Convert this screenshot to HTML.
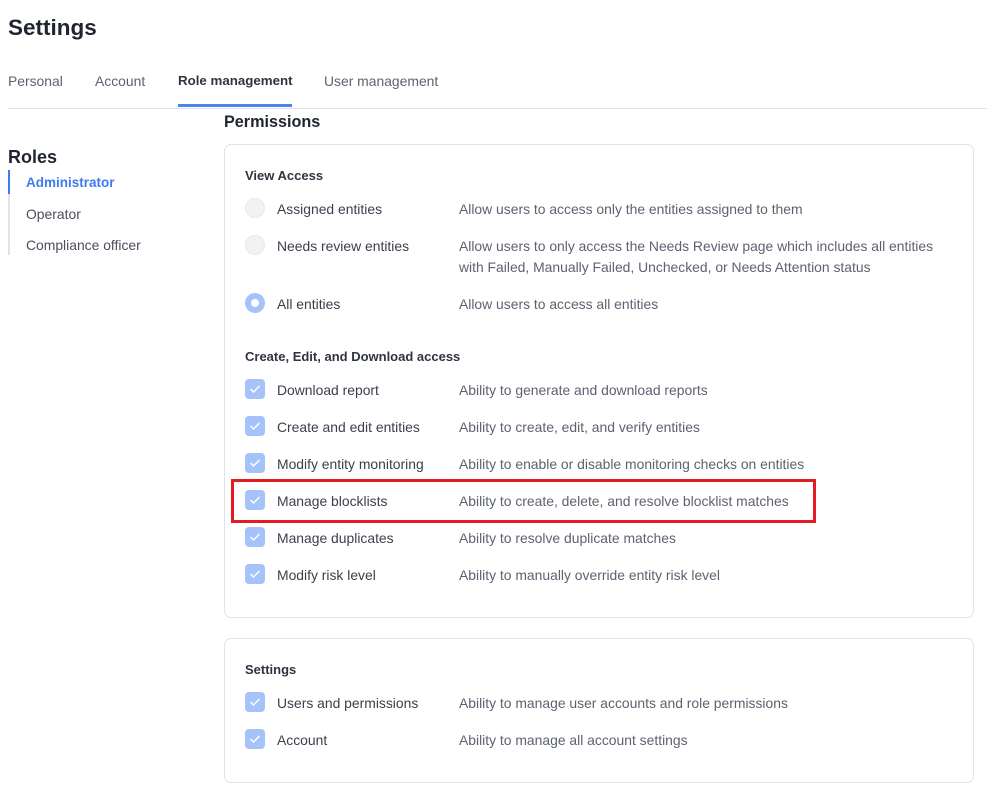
<!DOCTYPE html>
<html><head><style>
*{margin:0;padding:0;box-sizing:border-box}
body{width:987px;height:787px;background:#fff;font-family:"Liberation Sans",sans-serif;color:#2f3441;position:relative;overflow:hidden}
.a{position:absolute;white-space:nowrap}
.t{font-size:13.9px;color:#3a3f4b}
.d{font-size:13.9px;color:#5d6270}
.cb{position:absolute;left:245px;width:20px;height:20px;border-radius:4px;background:#a5c3f9}
.cb svg{position:absolute;left:4px;top:5px}
.rd{position:absolute;left:245px;width:20px;height:20px;border-radius:50%;background:#f1f2f4;border:1px solid #e6e8eb}
.card{position:absolute;left:224px;width:750px;border:1px solid #dfe2e6;border-radius:7px}
.h{font-size:13px;font-weight:bold;color:#2f3441}
</style></head><body>
<div class="a" style="left:8px;top:15px;font-size:22.5px;font-weight:bold;color:#1f2430">Settings</div>
<div class="a" style="left:8px;top:73px;font-size:13.9px;color:#5d6270">Personal</div>
<div class="a" style="left:95px;top:73px;font-size:13.9px;color:#5d6270">Account</div>
<div class="a" style="left:178px;top:73px;font-size:13.3px;color:#2f3441;font-weight:bold">Role management</div>
<div class="a" style="left:324px;top:73px;font-size:13.9px;color:#5d6270">User management</div>
<div class="a" style="left:8px;top:108px;width:979px;height:1px;background:#e1e3e6"></div>
<div class="a" style="left:178px;top:104px;width:114px;height:3px;background:#4a86f0"></div>
<div class="a" style="left:224px;top:113px;font-size:16.2px;font-weight:bold;color:#1f2430">Permissions</div>
<div class="a" style="left:8px;top:147px;font-size:18px;font-weight:bold;color:#1f2430">Roles</div>
<div class="a" style="left:8px;top:170px;width:2px;height:85px;background:#e1e3e6"></div>
<div class="a" style="left:8px;top:170px;width:2px;height:24px;background:#3d7bf0"></div>
<div class="a" style="left:26px;top:175px;font-size:13.5px;color:#3d7bf0;font-weight:bold">Administrator</div>
<div class="a" style="left:26px;top:206px;font-size:13.9px;color:#4a4f5c">Operator</div>
<div class="a" style="left:26px;top:237px;font-size:13.9px;color:#4a4f5c">Compliance officer</div>

<div class="card" style="top:144px;height:474px"></div>
<div class="card" style="top:638px;height:145px"></div>

<div class="a h" style="left:245px;top:168px">View Access</div>
<div class="rd" style="top:198px"></div>
<div class="a t" style="left:277px;top:201px">Assigned entities</div>
<div class="a d" style="left:459px;top:201px">Allow users to access only the entities assigned to them</div>
<div class="rd" style="top:235px"></div>
<div class="a t" style="left:277px;top:238px">Needs review entities</div>
<div class="a d" style="left:459px;top:238px">Allow users to only access the Needs Review page which includes all entities</div>
<div class="a d" style="left:459px;top:259px">with Failed, Manually Failed, Unchecked, or Needs Attention status</div>
<div class="a" style="left:245px;top:293px;width:20px;height:20px;border-radius:50%;background:#a5c3f9"><div style="position:absolute;left:6px;top:6px;width:8px;height:8px;border-radius:50%;background:#fff"></div></div>
<div class="a t" style="left:277px;top:296px">All entities</div>
<div class="a d" style="left:459px;top:296px">Allow users to access all entities</div>

<div class="a h" style="left:245px;top:349px">Create, Edit, and Download access</div>

<div class="cb" style="top:379px"><svg width="12" height="10"><path d="M1.5 5 L4.5 8 L10.5 2" stroke="#fff" stroke-width="1.5" fill="none"/></svg></div>
<div class="a t" style="left:277px;top:382px">Download report</div>
<div class="a d" style="left:459px;top:382px">Ability to generate and download reports</div>
<div class="cb" style="top:416px"><svg width="12" height="10"><path d="M1.5 5 L4.5 8 L10.5 2" stroke="#fff" stroke-width="1.5" fill="none"/></svg></div>
<div class="a t" style="left:277px;top:419px">Create and edit entities</div>
<div class="a d" style="left:459px;top:419px">Ability to create, edit, and verify entities</div>
<div class="cb" style="top:453px"><svg width="12" height="10"><path d="M1.5 5 L4.5 8 L10.5 2" stroke="#fff" stroke-width="1.5" fill="none"/></svg></div>
<div class="a t" style="left:277px;top:456px">Modify entity monitoring</div>
<div class="a d" style="left:459px;top:456px">Ability to enable or disable monitoring checks on entities</div>
<div class="cb" style="top:490px"><svg width="12" height="10"><path d="M1.5 5 L4.5 8 L10.5 2" stroke="#fff" stroke-width="1.5" fill="none"/></svg></div>
<div class="a t" style="left:277px;top:493px">Manage blocklists</div>
<div class="a d" style="left:459px;top:493px">Ability to create, delete, and resolve blocklist matches</div>
<div class="cb" style="top:527px"><svg width="12" height="10"><path d="M1.5 5 L4.5 8 L10.5 2" stroke="#fff" stroke-width="1.5" fill="none"/></svg></div>
<div class="a t" style="left:277px;top:530px">Manage duplicates</div>
<div class="a d" style="left:459px;top:530px">Ability to resolve duplicate matches</div>
<div class="cb" style="top:564px"><svg width="12" height="10"><path d="M1.5 5 L4.5 8 L10.5 2" stroke="#fff" stroke-width="1.5" fill="none"/></svg></div>
<div class="a t" style="left:277px;top:567px">Modify risk level</div>
<div class="a d" style="left:459px;top:567px">Ability to manually override entity risk level</div>

<div class="a" style="left:231px;top:479px;width:585px;height:44px;border:3px solid #e31b23"></div>

<div class="a h" style="left:245px;top:662px">Settings</div>
<div class="cb" style="top:692px"><svg width="12" height="10"><path d="M1.5 5 L4.5 8 L10.5 2" stroke="#fff" stroke-width="1.5" fill="none"/></svg></div>
<div class="a t" style="left:277px;top:695px">Users and permissions</div>
<div class="a d" style="left:459px;top:695px">Ability to manage user accounts and role permissions</div>
<div class="cb" style="top:729px"><svg width="12" height="10"><path d="M1.5 5 L4.5 8 L10.5 2" stroke="#fff" stroke-width="1.5" fill="none"/></svg></div>
<div class="a t" style="left:277px;top:732px">Account</div>
<div class="a d" style="left:459px;top:732px">Ability to manage all account settings</div>
</body></html>
